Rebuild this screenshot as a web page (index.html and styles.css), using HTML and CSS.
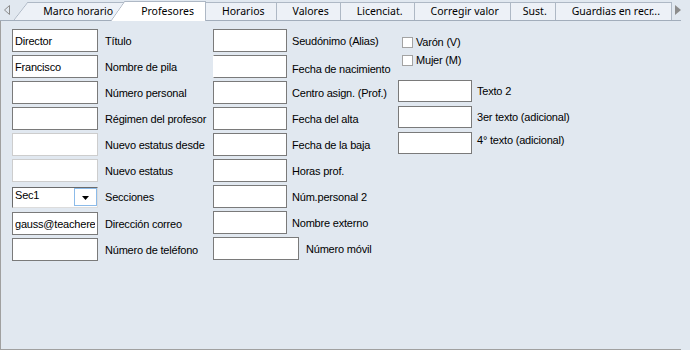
FILE: index.html
```html
<!DOCTYPE html>
<html lang="es">
<head>
  <meta charset="UTF-8" />
  <title>Profesores</title>
  <link rel="stylesheet" href="styles.css">
</head>
<body>
  <div class="ventana">
    <div class="pestanas">
      <span class="flecha flecha-izq">
        <svg width="6" height="10" viewBox="0 0 6 10"><polygon points="5.5,0.5 0.5,5 5.5,9.5" fill="none" stroke="#8c8c8c" /></svg>
      </span>
      <div class="pestana inclinada primera">Marco horario</div>
      <div class="pestana inclinada activa">Profesores</div>
      <div class="pestana">Horarios</div>
      <div class="pestana">Valores</div>
      <div class="pestana">Licenciat.</div>
      <div class="pestana">Corregir valor</div>
      <div class="pestana estrecha">Sust.</div>
      <div class="pestana">Guardias en recr...</div>
      <span class="flecha flecha-der">
        <svg width="6" height="10" viewBox="0 0 6 10"><polygon points="0,0 6,5 0,10" fill="#8c8c8c" /></svg>
      </span>
    </div>

    <div class="panel">
      <div class="columna col-1">
        <div class="fila"><input class="campo" value="Director"><label>Título</label></div>
        <div class="fila"><input class="campo" value="Francisco"><label>Nombre de pila</label></div>
        <div class="fila"><input class="campo"><label>Número personal</label></div>
        <div class="fila"><input class="campo"><label>Régimen del profesor</label></div>
        <div class="fila"><input class="campo inactivo"><label>Nuevo estatus desde</label></div>
        <div class="fila"><input class="campo inactivo"><label>Nuevo estatus</label></div>
        <div class="fila fila-combo">
          <div class="combo">
            <span class="combo-texto">Sec1</span>
            <span class="combo-boton">
              <svg width="7" height="4" viewBox="0 0 7 4"><polygon points="0,0 7,0 3.5,4" fill="#000" /></svg>
            </span>
          </div>
          <label>Secciones</label>
        </div>
        <div class="fila"><input class="campo" value="gauss@teacherexample.com"><label>Dirección correo</label></div>
        <div class="fila"><input class="campo"><label>Número de teléfono</label></div>
      </div>

      <div class="columna col-2">
        <div class="fila"><input class="campo corto"><label>Seudónimo (Alias)</label></div>
        <div class="fila"><input class="campo corto sin-izq"><label class="bajo">Fecha de nacimiento</label></div>
        <div class="fila"><input class="campo corto"><label>Centro asign. (Prof.)</label></div>
        <div class="fila"><input class="campo corto"><label>Fecha del alta</label></div>
        <div class="fila"><input class="campo corto"><label>Fecha de la baja</label></div>
        <div class="fila"><input class="campo corto"><label>Horas prof.</label></div>
        <div class="fila"><input class="campo corto"><label>Núm.personal 2</label></div>
        <div class="fila"><input class="campo corto"><label>Nombre externo</label></div>
        <div class="fila"><input class="campo"><label>Número móvil</label></div>
      </div>

      <div class="columna col-3">
        <div class="fila-check"><input type="checkbox" class="casilla"><label>Varón (V)</label></div>
        <div class="fila-check"><input type="checkbox" class="casilla"><label>Mujer (M)</label></div>
        <div class="textos">
          <div class="fila"><input class="campo corto"><label>Texto 2</label></div>
          <div class="fila"><input class="campo corto"><label>3er texto (adicional)</label></div>
          <div class="fila"><input class="campo corto"><label class="alto">4° texto (adicional)</label></div>
        </div>
      </div>
    </div>
  </div>
</body>
</html>
```

FILE: styles.css
```css
body {
  margin: 0;
  background-color: #e1e8f0;
  font-family: 'Liberation Sans', Arial, sans-serif;
  font-size: 11px;
  color: #000;
}
.ventana {
  width: 681px;
}

/* pestañas */
.pestanas {
  display: flex;
  align-items: flex-end;
  height: 20px;
  border-bottom: 1px solid #a2adbb;
}
.flecha {
  align-self: center;
  display: flex;
}
.flecha-izq {
  width: 13px;
  padding-left: 4px;
}
.flecha-der {
  margin-left: 3px;
}
.pestana {
  --fondo: #edf1f7;
  position: relative;
  box-sizing: border-box;
  height: 18px;
  padding: 0 11px 0 16px;
  border-top: 1px solid #aeb8c5;
  border-right: 1px solid #aeb8c5;
  background-color: var(--fondo);
  font-family: 'Noto Sans', 'Liberation Sans', sans-serif;
  font-size: 10.5px;
  line-height: 16px;
  white-space: nowrap;
  color: #000;
}
.pestana.estrecha {
  padding: 0 8px 0 12px;
}
.pestana.inclinada::before {
  content: '';
  position: absolute;
  left: -14px;
  top: -1px;
  bottom: 0;
  width: 14px;
  background: linear-gradient(to bottom right, transparent calc(50% - 0.7px), #aeb8c5 50%, var(--fondo) calc(50% + 0.7px));
}
.pestana.primera {
  margin-left: 14px;
  padding: 0 12px 0 15px;
  border-right: none;
}
.pestana.activa {
  --fondo: #ffffff;
  z-index: 1;
  height: 20px;
  margin-bottom: -1px;
  line-height: 18px;
}

/* panel */
.panel {
  display: flex;
  box-sizing: border-box;
  height: 329px;
  padding: 8px 0 0 11px;
  border-left: 1px solid #a0a0a0;
  border-bottom: 1px solid #a0a0a0;
}
.col-1 { width: 201px; }
.col-2 { width: 185px; }
.col-3 { padding-top: 4px; }

.fila {
  display: flex;
  align-items: center;
  gap: 7px;
  height: 23px;
  margin-bottom: 3px;
  white-space: nowrap;
  letter-spacing: -0.2px;
}
.fila-combo {
  height: 24px;
}
.col-2 .fila { gap: 5px; }
.col-2 .fila:last-child { gap: 7px; }

.campo {
  box-sizing: border-box;
  width: 86px;
  height: 23px;
  margin: 0;
  padding: 0 2px;
  border: 1px solid #7a7a7a;
  background: #fff;
  font-family: inherit;
  font-size: 11px;
  letter-spacing: -0.2px;
  color: #000;
  outline: none;
}
.campo.corto { width: 74px; }
.campo.inactivo { border-color: #cdcdcd; }
.campo.sin-izq { border-left-color: #fff; }

label.bajo { padding-top: 5px; }
label.alto { margin-top: -6px; }

/* combo */
.combo {
  display: flex;
  box-sizing: border-box;
  width: 86px;
  height: 21px;
  border: 1px solid;
  border-color: #6b6b6b #dcdcdc #dcdcdc #6b6b6b;
  background: #fff;
}
.combo-texto {
  flex: 1;
  padding: 1px 0 0 2px;
  line-height: 12px;
}
.combo-boton {
  display: flex;
  align-items: center;
  justify-content: center;
  width: 23px;
  margin: 0 0 1px;
  box-sizing: border-box;
  border: 1px solid #8cbbe9;
  padding-top: 3px;
}

/* casillas */
.fila-check {
  display: flex;
  align-items: center;
  gap: 3px;
  height: 18px;
  padding-left: 4px;
  letter-spacing: -0.2px;
}
.casilla {
  appearance: none;
  box-sizing: border-box;
  width: 11px;
  height: 11px;
  margin: 0;
  border: 1px solid #a3a3a3;
  background: #fff;
}
.textos {
  margin-top: 11px;
}
.textos .fila {
  gap: 5px;
  height: 22px;
  margin-bottom: 4px;
}
.textos .campo { height: 22px; }
```
